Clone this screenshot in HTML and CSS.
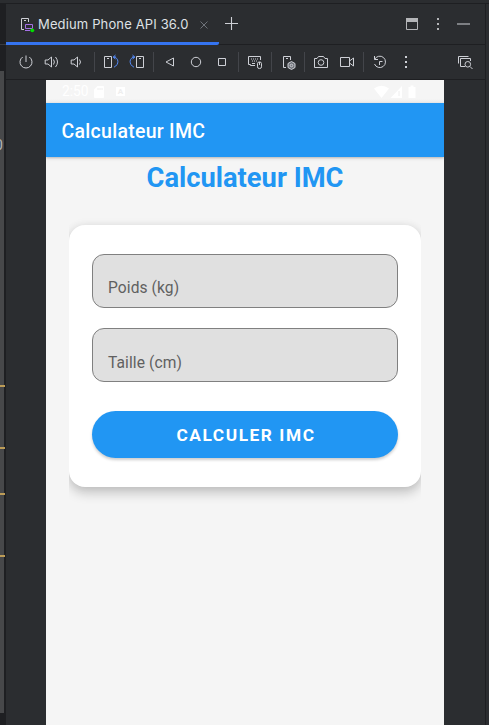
FILE: index.html
```
<!DOCTYPE html>
<html lang="fr">
<head>
<meta charset="utf-8">
<title>Calculateur IMC</title>
<link rel="stylesheet" href="styles.css">
</head>
<body>
<div class="window">
  <aside class="editor-edge">
    <div class="scroll-track"></div>
    <span class="edge-letter">0</span>
    <i class="mark mark-a"></i><i class="mark mark-b"></i><i class="mark mark-c"></i><i class="mark mark-d"></i>
  </aside>
  <main class="panel">
    <header class="tabs">
      <div class="tab">
        <svg class="device-icon" width="16" height="16" viewBox="0 0 16 16" fill="none">
          <path d="M5 12.500H2.500V1.500H9.500V5M5 3.500H7" stroke="#ced0d6"/>
          <path d="M6.500 7.500H13.500V11.500H6.500ZM6 13.500H11" stroke="#a571e6"/>
          <circle cx="13.300" cy="13.300" r="1.900" fill="#00e000"/>
        </svg>
        <span class="tab-name">Medium Phone API 36.0</span>
        <svg class="close" width="10" height="10" viewBox="0 0 10 10"><path d="M1.500 1.500L8.500 8.500M8.500 1.500L1.500 8.500" stroke="#6f737a"/></svg>
      </div>
      <svg class="plus" width="14" height="14" viewBox="0 0 14 14"><path d="M7.500 1V14M1 7.500H14" stroke="#ced0d6" stroke-width="1.100"/></svg>
      <div class="window-tools">
        <svg width="12" height="12" viewBox="0 0 12 12"><path d="M.5 .5H11.500V11.500H.5Z" fill="none" stroke="#b4b5b8"/><path d="M0 0H12V4H0Z" fill="#b4b5b8"/></svg>
        <svg width="4" height="14" viewBox="0 0 4 14" fill="#b4b5b8"><path d="M1 1h2v2H1zM1 6h2v2H1zM1 11h2v2H1z"/></svg>
        <svg width="14" height="14" viewBox="0 0 14 14" fill="#7d7f83"><path d="M1 6h13v2H1z"/></svg>
      </div>
    </header>
    <nav class="toolbar">
      <svg class="tool" viewBox="0 0 16 16"><path d="M4.700 3A6 6 0 1 0 11.300 3M8 1.500V8"/></svg>
      <svg class="tool" viewBox="0 0 16 16"><path d="M1.200 6H4L7.500 3V13L4 10H1.200ZM9.500 5.500Q11.300 8 9.500 10.500M11.500 3Q15.500 8 11.500 13"/></svg>
      <svg class="tool vol-down" viewBox="0 0 16 16"><path d="M2.200 6H5L8.500 3V13L5 10H2.200ZM10.500 5.500Q12.500 8 10.500 10.500"/></svg>
      <i class="sep"></i>
      <svg class="tool" viewBox="0 0 16 16"><path d="M1.500 2.500H8.500V13.500H1.500ZM4 4.500H6"/><path class="blue" d="M10 3H13M12.500 1L10.300 3L12.500 5.300M10.500 3C16 3.500 16.500 10.500 11 13.200"/></svg>
      <svg class="tool" viewBox="0 0 16 16"><path d="M7.500 2.500H14.500V13.500H7.500ZM10 4.500H12"/><path class="blue" d="M6 3H3M3.500 1L5.700 3L3.500 5.300M5.500 3C0 3.500-.5 10.500 5 13.200"/></svg>
      <i class="sep"></i>
      <svg class="tool" viewBox="0 0 16 16"><path d="M4 8L11.500 4V12Z"/></svg>
      <svg class="tool" viewBox="0 0 16 16"><circle cx="8" cy="8" r="4.700"/></svg>
      <svg class="tool" viewBox="0 0 16 16"><path d="M4.500 4.500H11.500V11.500H4.500Z"/></svg>
      <i class="sep"></i>
      <svg class="tool" viewBox="0 0 16 16"><path d="M8 11.500H3.500V10.500H1.500V2.500H13.500V6M5 9.500H8"/><path d="M4 5H12M5 7H11" stroke-dasharray="1 1"/><rect x="10.500" y="8" width="4" height="6.500" rx="1.700"/><path d="M12.500 8V11"/></svg>
      <i class="sep"></i>
      <svg class="tool" viewBox="0 0 16 16"><path d="M6 13.500H3.500V2.500H10.500V6M6 4.500H8"/><path class="gear" d="M11.500 7.500L15 9.500V13.500L11.500 15.500L8 13.500V9.500Z"/><circle cx="11.500" cy="11.500" r="1.300"/></svg>
      <i class="sep"></i>
      <svg class="tool" viewBox="0 0 16 16"><path d="M1.500 4.500H4L5.500 2.500H10.500L12 4.500H14.500V13.500H1.500Z"/><circle cx="8" cy="8.500" r="2.800"/></svg>
      <svg class="tool" viewBox="0 0 16 16"><path d="M1.500 3.500H10.500V12.500H1.500ZM10.500 7L14.500 4V12L10.500 9"/></svg>
      <i class="sep"></i>
      <svg class="tool" viewBox="0 0 16 16"><path d="M2.500 2V5.500H6M2.700 5.300A5.700 5.700 0 1 1 2.500 10M7.500 11V7.500H10.500"/></svg>
      <svg class="tool" viewBox="0 0 16 16"><path class="dots" d="M7 2h2v2H7zM7 7h2v2H7zM7 12h2v2H7z"/></svg>
      <svg class="tool inspect" viewBox="0 0 16 16"><path d="M1.500 9.500V2.500H11.500M8 12.500H3.500V4.500H13.500V7"/><circle cx="10.800" cy="10.300" r="2.800"/><path d="M13 12.500L15.500 15"/></svg>
    </nav>
    <section class="phone">
      <div class="status">
        <span class="clock">2:50</span>
        <svg class="sd" width="10" height="12" viewBox="0 0 10 12"><path d="M3.500 0H9Q10 0 10 1V11Q10 12 9 12H1Q0 12 0 11V3.500Z" fill="#fff"/><path d="M4 2V4M6 2V4M8 2V4" stroke="#eee"/></svg>
        <span class="badge">A</span>
        <svg class="signals" width="44" height="14" viewBox="0 0 44 14" fill="#fff"><path d="M0 3.500Q7.500-2 15 3.500L7.500 13ZM28 1V13H16.500Z"/><path d="M25 6V11" stroke="#eee"/><path d="M34.500 2H36.500V.5H39.500V2H41.500V13H34.500Z"/></svg>
      </div>
      <div class="appbar">Calculateur IMC</div>
      <div class="content">
        <h1>Calculateur IMC</h1>
        <div class="card-clip">
          <form class="card">
            <div class="field">Poids (kg)</div>
            <div class="field">Taille (cm)</div>
            <button type="button">CALCULER IMC</button>
          </form>
        </div>
      </div>
    </section>
  </main>
  <div class="right-edge"></div>
</div>
</body>
</html>
```

FILE: styles.css
```
* { box-sizing: border-box; }
body { margin: 0; background: #2b2d30; font-family: Roboto, sans-serif; overflow: hidden; }
svg { display: block; flex: none; }
.window { display: flex; width: 489px; height: 725px; padding-top: 3px; }
.editor-edge { position: relative; width: 6px; border-top: 1px solid #1e1f22; background: #1e1f22; padding-top: 40px; overflow: hidden; }
.editor-edge::before { content: ""; display: block; height: 1px; background: #393b40; }
.scroll-track { width: 4px; height: 642px; margin-top: 26px; background: #47484a; }
.edge-letter { position: absolute; left: -5px; top: 133px; font-size: 14px; color: #b4b5b8; }
.mark { position: absolute; left: 0; width: 5px; height: 2px; background: #bd9c57; }
.mark-a { top: 381px; }
.mark-b { top: 443px; }
.mark-c { top: 489px; }
.mark-d { top: 551px; }
.panel { display: flex; flex-direction: column; width: 479px; border-top: 1px solid #1e1f22; }
.right-edge { width: 4px; border-left: 1px solid #1e1f22; border-top: 1px solid #1e1f22; }
.tabs { display: flex; align-items: flex-start; height: 41px; box-shadow: inset 0 -1px #1e1f22; }
.tab { display: flex; align-items: center; width: 213px; height: 41px; padding-left: 13px; border-bottom: 3px solid #3574f0; border-radius: 0 0 2px 0; }
.device-icon { margin-top: 3px; }
.tab-name { width: 155px; margin: 2px 0 0 3px; font-family: Inter, sans-serif; font-size: 13px; letter-spacing: .14px; line-height: 18px; color: #dfe1e5; white-space: nowrap; }
.close { margin: 4px 0 0 6px; }
.plus { margin: 12px 0 0 5px; }
.window-tools { display: flex; align-items: center; gap: 17px; margin: 13px 15px 0 auto; }
.window-tools svg:nth-child(2) { margin: 0 -1px 0 1px; }
.toolbar { display: flex; align-items: center; height: 35px; padding: 0 7px 1px; border-bottom: 1px solid #1e1f22; }
.tool { width: 26px; height: 16px; fill: none; stroke: #ced0d6; stroke-width: 1; }
.vol-down { margin: 0 1px 0 -1px; }
.tool .blue { stroke: #548af7; }
.tool .gear { fill: #6f737a; }
.tool .dots { fill: #ced0d6; stroke: none; }
.sep { width: 1px; height: 20px; margin: 0 3px; background: #43454a; }
.inspect { margin-left: auto; }
.phone { width: 398px; height: 645px; margin-left: 40px; background: #f5f5f5; overflow: hidden; }
.status { display: flex; align-items: center; height: 23px; padding: 0 26px 0 16px; color: #fff; background: linear-gradient(#f5f5f5 19px, #e9e9e9); }
.clock { width: 27px; margin-top: -2px; font-size: 13.800px; }
.sd { margin-left: 5px; }
.badge { width: 9px; height: 9px; margin-left: 12px; background: #fff; color: #eee; font-size: 8px; line-height: 9px; text-align: center; font-weight: 700; }
.signals { margin-left: auto; }
.appbar { position: relative; height: 54px; padding-left: 15.500px; line-height: 57px; font-size: 19.500px; font-weight: 500; letter-spacing: .28px; color: #fff; background: #2196f3; box-shadow: 0 1px 2px #0003, 0 2px 4px #0001; }
.content { padding: 0 23px; }
h1 { height: 43px; margin: 0; font-size: 27.300px; line-height: 42px; font-weight: 700; color: #2196f3; text-align: center; }
.card-clip { padding: 25px 0 30px; overflow: hidden; }
.card { display: flex; flex-direction: column; height: 262px; padding: 29px 23.400px; border-radius: 16px; background: #fff; box-shadow: 0 6px 12px #0003, 0 0 10px #0001; }
.field { height: 54px; margin-bottom: 20px; padding: 24px 14.600px 0; border: 1px solid #808080; border-radius: 12px; background: #e0e0e0; color: #606060; font-size: 15.600px; line-height: 18px; letter-spacing: .08px; }
.field + .field { padding-top: 25px; }
button { height: 47px; margin-top: 9px; padding: 1px 0 0 2px; border: 0; border-radius: 24px; background: #2196f3; color: #fff; font: 700 17.300px Roboto, sans-serif; letter-spacing: 1.560px; box-shadow: 0 2px 3px #0003; }
```
